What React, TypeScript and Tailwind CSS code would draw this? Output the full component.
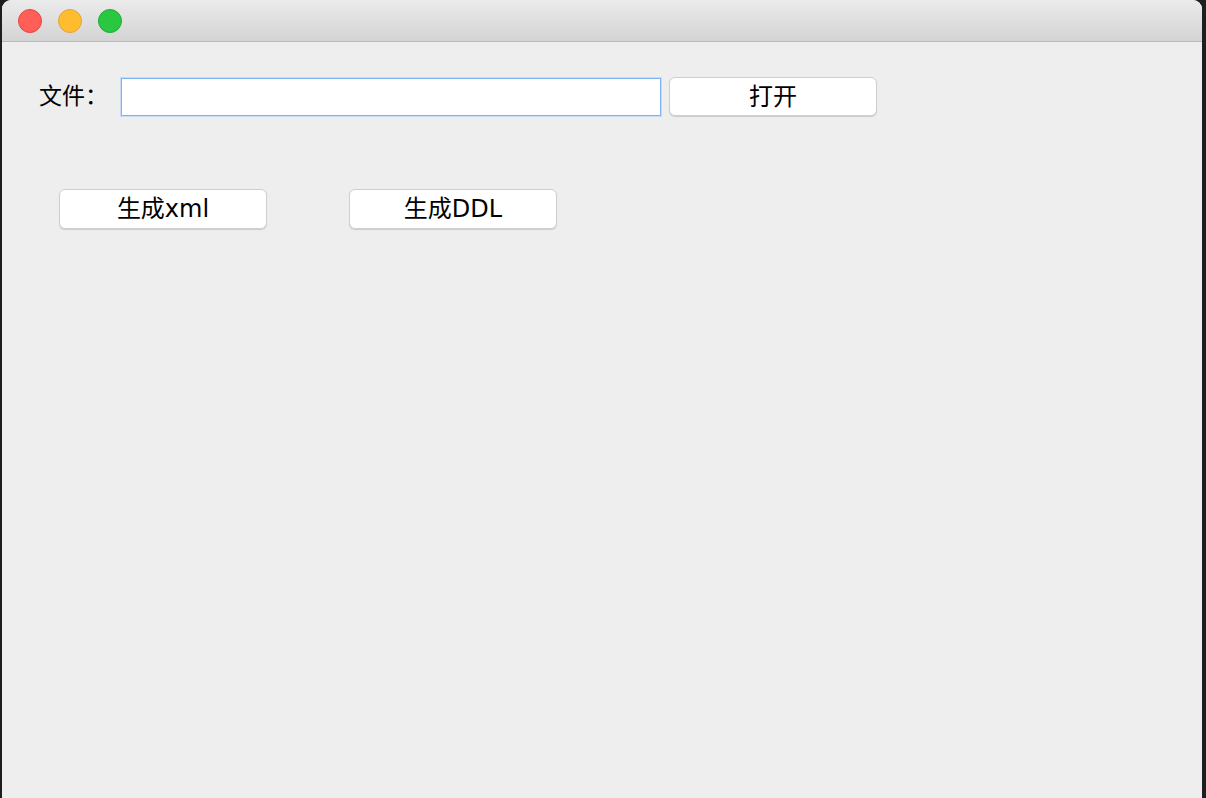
export default function App() {
  const font = {
    fontFamily: '"DejaVu Sans", "Noto Sans CJK SC", sans-serif',
  };

  return (
    <div className="h-[798px] w-[1206px] bg-[#1e1e1e] pl-[2px] pr-[4px] overflow-hidden" style={font}>
      <div className="flex h-full flex-col overflow-hidden rounded-t-[9px] bg-[#eeeeee]">
        {/* barra de título */}
        <div className="flex h-[42px] shrink-0 items-center gap-[16px] border-b border-[#b9b9b9] bg-gradient-to-b from-[#ebebeb] to-[#d4d4d4] pl-[16px]">
          <span className="h-[24px] w-[24px] rounded-full border border-[#e2463f] bg-[#ff5f57]" />
          <span className="h-[24px] w-[24px] rounded-full border border-[#e1a33a] bg-[#febc2e]" />
          <span className="h-[24px] w-[24px] rounded-full border border-[#1faa35] bg-[#2ac840]" />
        </div>

        <div className="flex items-center pl-[37px] pt-[35px]">
          <span className="w-[82px] text-[23px] leading-none text-black">文件：</span>
          <input
            type="text"
            className="h-[38px] w-[540px] border border-[#7fb1f3] bg-white px-2 text-[18px] outline-none shadow-[0_0_0_1px_#c8dcf8]"
          />
          <button className="ml-[8px] h-[39px] w-[208px] rounded-[6px] border border-[#cfcfcf] bg-white text-[24px] leading-none text-black shadow-[0_1px_1px_rgba(0,0,0,0.15)]">
            打开
          </button>
        </div>

        <div className="flex gap-[82px] pl-[57px] pt-[73px]">
          <button className="h-[40px] w-[208px] rounded-[6px] border border-[#cfcfcf] bg-white text-[24px] leading-none text-black shadow-[0_1px_1px_rgba(0,0,0,0.15)]">
            生成xml
          </button>
          <button className="h-[40px] w-[208px] rounded-[6px] border border-[#cfcfcf] bg-white text-[24px] leading-none text-black shadow-[0_1px_1px_rgba(0,0,0,0.15)]">
            生成DDL
          </button>
        </div>
      </div>
    </div>
  );
}
